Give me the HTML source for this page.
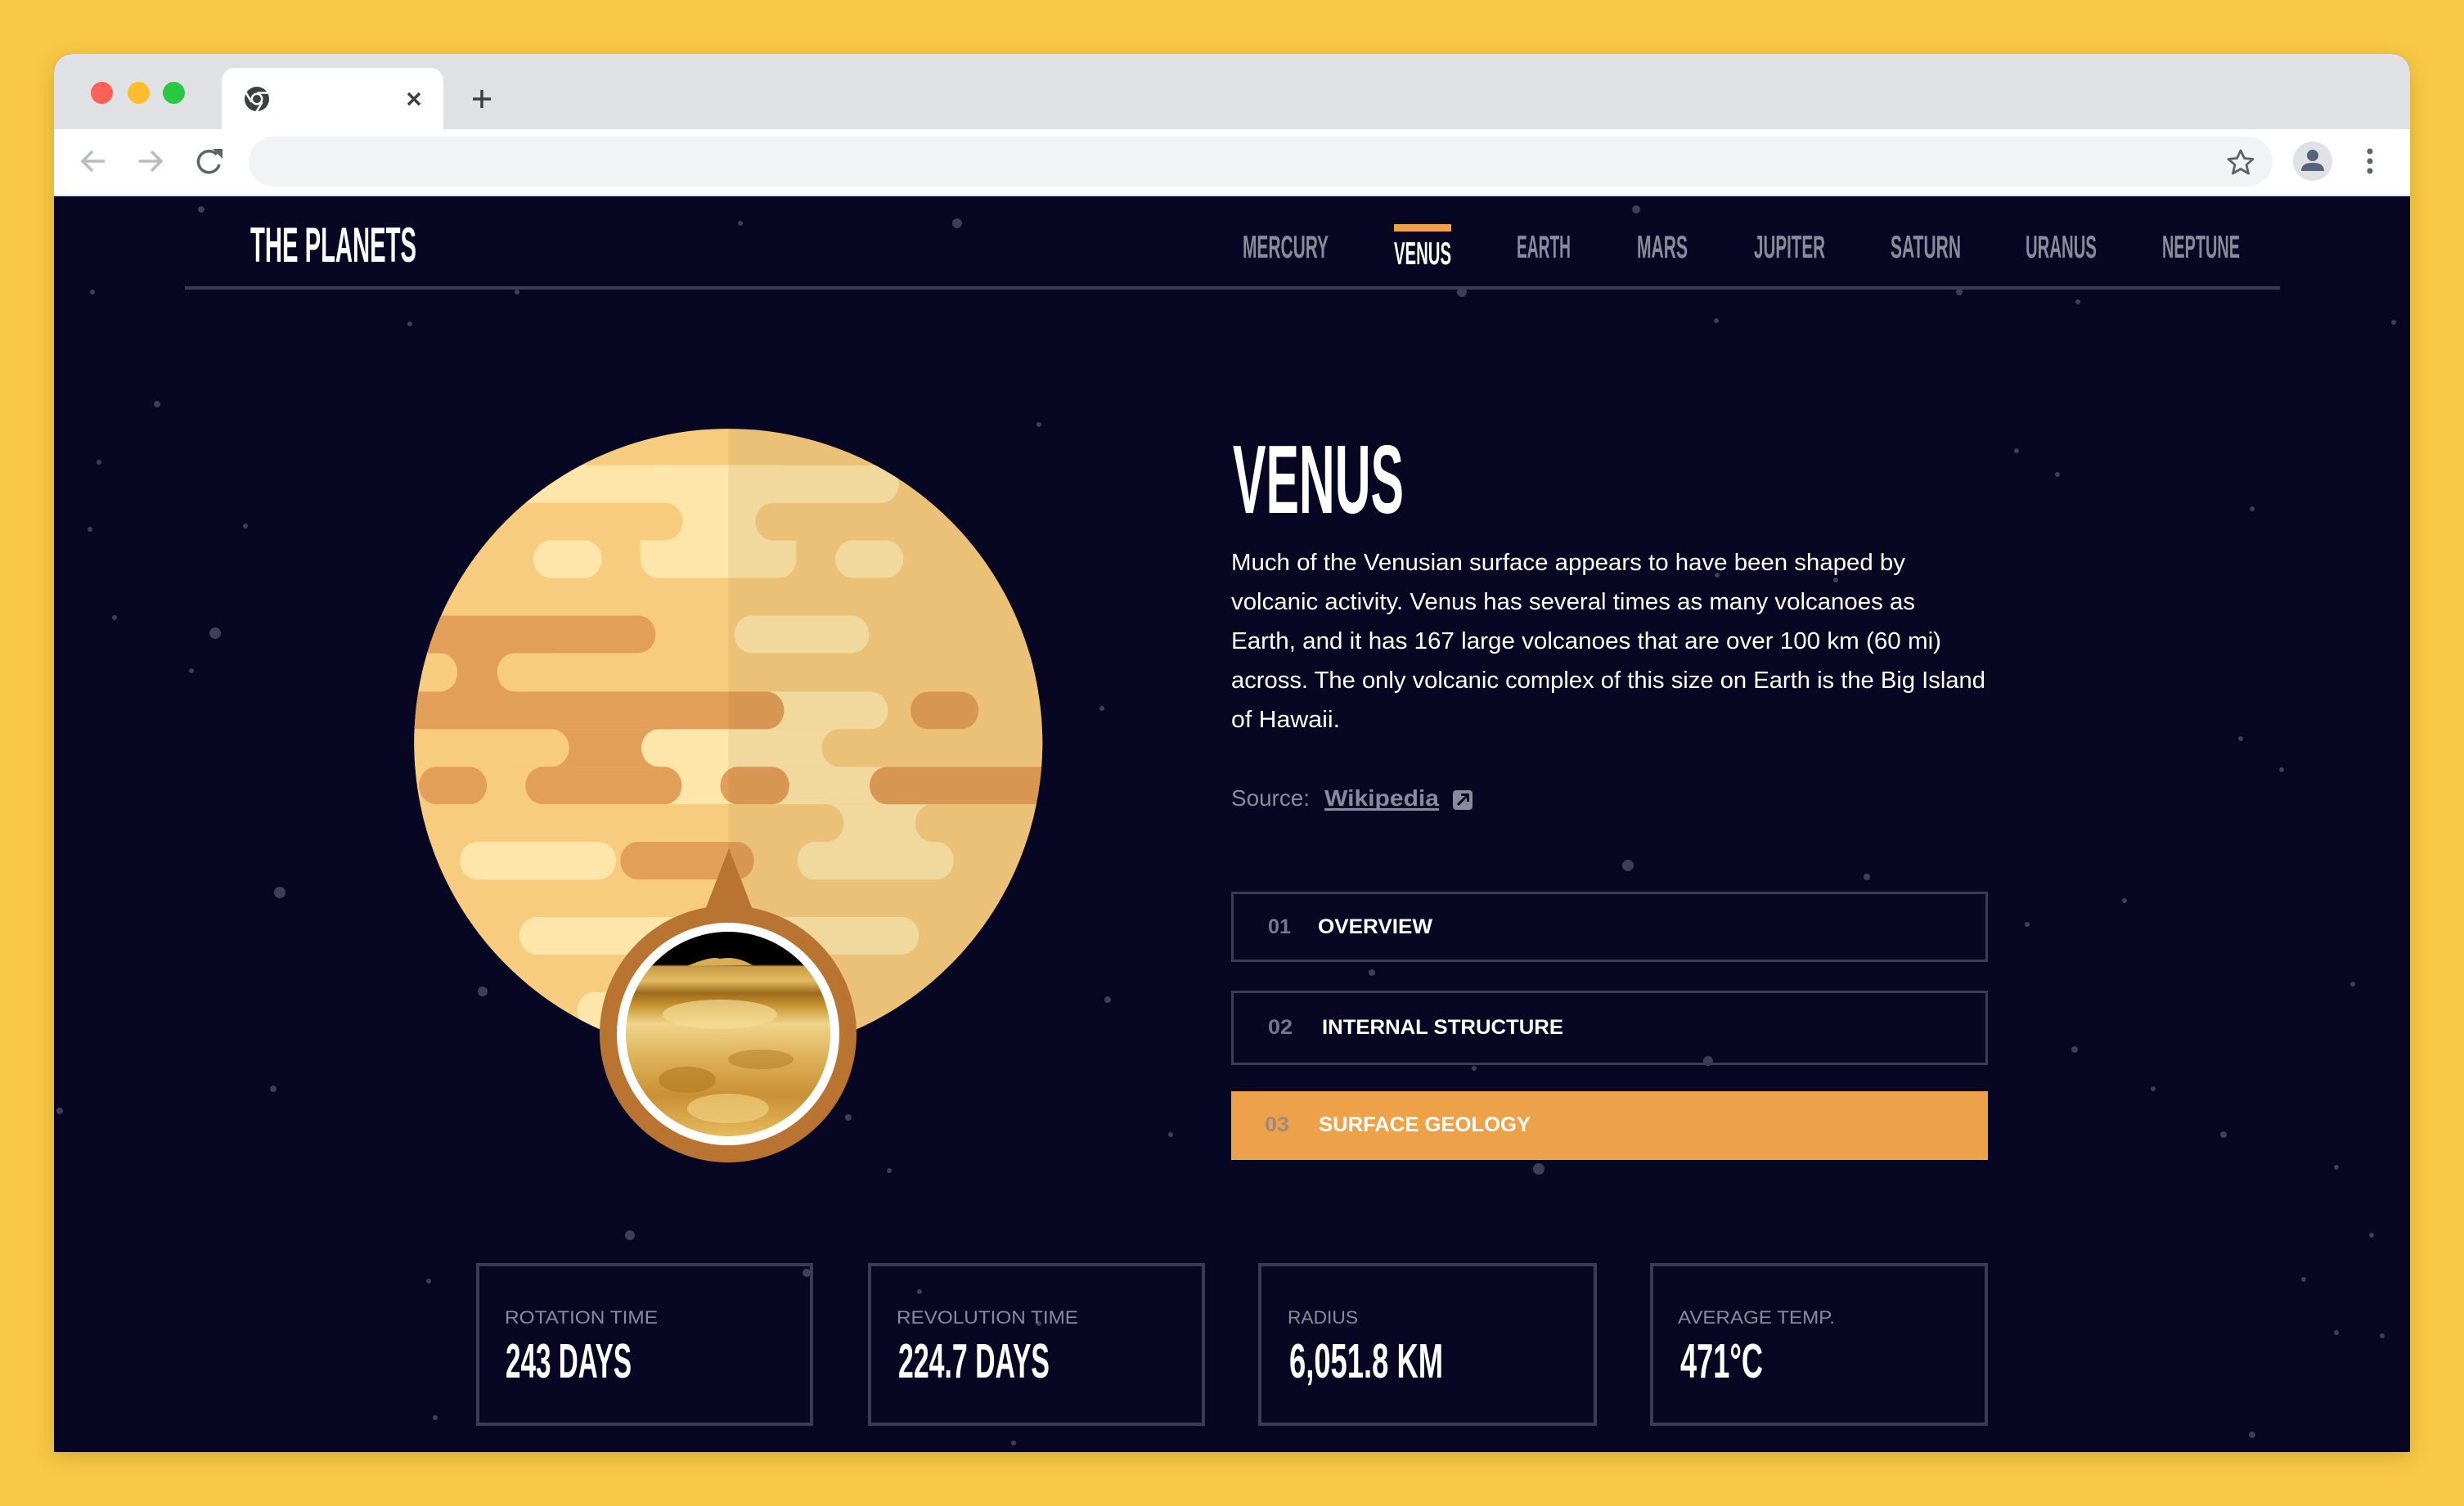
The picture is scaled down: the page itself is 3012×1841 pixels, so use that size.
<!DOCTYPE html>
<html><head><meta charset="utf-8">
<style>
html,body{margin:0;padding:0;background:#F7C944;}
body{width:3012px;height:1841px;position:relative;overflow:hidden;font-family:"Liberation Sans",sans-serif;}
.win{position:absolute;left:66px;top:66px;width:2880px;height:1709px;border-radius:22px 22px 0 0;overflow:hidden;background:#070724;box-shadow:0 6px 24px rgba(120,80,0,0.25);}
.tabbar{position:absolute;left:0;top:0;width:2880px;height:92px;background:#DFE1E5;}
.toolbar{position:absolute;left:0;top:92px;width:2880px;height:82px;background:#fff;border-bottom:2px solid #e4e5e8;box-sizing:border-box;}
.tab{position:absolute;left:205px;top:17px;width:271px;height:80px;background:#fff;border-radius:16px 16px 0 0;}
.addr{position:absolute;left:238px;top:9px;width:2474px;height:61px;border-radius:31px;background:#F1F3F4;}
.dot{position:absolute;width:27px;height:27px;border-radius:50%;top:34px;}
</style></head><body>
<div class="win">
  <div class="tabbar">
    <div class="dot" style="left:45px;background:#FE5F57"></div>
    <div class="dot" style="left:90px;background:#FEBC2E"></div>
    <div class="dot" style="left:133px;background:#28C840"></div>
    <div class="tab"></div>
    <svg style="position:absolute;left:0;top:0" width="700" height="92">
      <circle cx="248" cy="55" r="15" fill="#3c4043"/>
      <circle cx="248" cy="55" r="7.5" fill="#fff"/>
      <circle cx="248" cy="55" r="5" fill="#3c4043"/>
      <path d="M248 47.5 L262 47.5 M241.5 59 L234.5 47 M254.5 59 L247.5 70.5" stroke="#fff" stroke-width="2.5"/>
      <path d="M433 48 L447 62 M447 48 L433 62" stroke="#3c4043" stroke-width="3.5"/>
      <path d="M523 44 V66 M512 55 H534" stroke="#3c4043" stroke-width="3.5"/>
    </svg>
  </div>
  <div class="toolbar">
    <div class="addr"></div>
    <svg style="position:absolute;left:0;top:0" width="2880" height="82">
      <path d="M62 39 H36 M47 27 L35 39 L47 51" stroke="#b8bcc1" stroke-width="3.5" fill="none"/>
      <path d="M104 39 H130 M119 27 L131 39 L119 51" stroke="#b8bcc1" stroke-width="3.5" fill="none"/>
      <path d="M199 31 A13 13 0 1 0 202 43" stroke="#5f6368" stroke-width="3.5" fill="none"/>
      <path d="M194 24 L206 24 L206 36 Z" fill="#5f6368"/>
      <path d="M2673 26 L2677.5 35.5 L2688 36.5 L2680 43.5 L2682.5 54 L2673 48.5 L2663.5 54 L2666 43.5 L2658 36.5 L2668.5 35.5 Z" stroke="#5f6368" stroke-width="2.8" fill="none" stroke-linejoin="round"/>
      <circle cx="2761" cy="39" r="24" fill="#DFE1E5"/>
      <circle cx="2761" cy="32" r="7" fill="#56627a"/>
      <path d="M2747 51 Q2747 41 2761 41 Q2775 41 2775 51 Z" fill="#56627a"/>
      <circle cx="2831" cy="27" r="3.5" fill="#5f6368"/><circle cx="2831" cy="39" r="3.5" fill="#5f6368"/><circle cx="2831" cy="51" r="3.5" fill="#5f6368"/>
    </svg>
  </div>
</div>

<svg style="position:absolute;left:0;top:0" width="3012" height="1841" viewBox="0 0 3012 1841">
  <g fill="#3d3e58">
    <circle cx="246" cy="256" r="4"/><circle cx="1170" cy="273" r="6"/><circle cx="2000" cy="256" r="5"/><circle cx="905" cy="273" r="3"/>
    <circle cx="113" cy="357" r="3"/><circle cx="501" cy="396" r="3"/><circle cx="632" cy="357" r="3"/><circle cx="1787" cy="357" r="6"/>
    <circle cx="2395" cy="357" r="4"/><circle cx="2098" cy="392" r="3"/><circle cx="2540" cy="369" r="3"/><circle cx="2926" cy="394" r="3"/>
    <circle cx="192" cy="494" r="4"/><circle cx="1270" cy="519" r="3"/><circle cx="121" cy="565" r="3"/><circle cx="2465" cy="551" r="3"/>
    <circle cx="2515" cy="580" r="3"/><circle cx="2753" cy="622" r="3"/><circle cx="110" cy="647" r="3"/><circle cx="300" cy="643" r="3"/>
    <circle cx="263" cy="774" r="7"/><circle cx="234" cy="820" r="3"/><circle cx="140" cy="755" r="3"/><circle cx="1347" cy="866" r="3"/>
    <circle cx="1990" cy="1058" r="7"/><circle cx="2282" cy="1072" r="4"/><circle cx="2478" cy="1130" r="3"/><circle cx="2597" cy="1101" r="3"/>
    <circle cx="2739" cy="903" r="3"/><circle cx="2789" cy="941" r="3"/><circle cx="342" cy="1091" r="7"/><circle cx="590" cy="1212" r="6"/>
    <circle cx="1354" cy="1222" r="4"/><circle cx="1677" cy="1189" r="4"/><circle cx="2536" cy="1283" r="4"/><circle cx="2088" cy="1297" r="6"/>
    <circle cx="1802" cy="1306" r="3"/><circle cx="2632" cy="1331" r="3"/><circle cx="2876" cy="1203" r="3"/><circle cx="334" cy="1331" r="4"/>
    <circle cx="73" cy="1358" r="4"/><circle cx="1037" cy="1366" r="4"/><circle cx="1431" cy="1387" r="3"/><circle cx="1087" cy="1431" r="3"/>
    <circle cx="1881" cy="1429" r="7"/><circle cx="2718" cy="1387" r="4"/><circle cx="2856" cy="1427" r="3"/><circle cx="770" cy="1510" r="6"/>
    <circle cx="2899" cy="1510" r="3"/><circle cx="2816" cy="1564" r="3"/><circle cx="2912" cy="1633" r="3"/><circle cx="2856" cy="1629" r="3"/>
    <circle cx="524" cy="1566" r="3"/><circle cx="532" cy="1733" r="3"/><circle cx="986" cy="1556" r="5"/><circle cx="1124" cy="1579" r="3"/>
    <circle cx="1239" cy="1764" r="3"/><circle cx="2753" cy="1754" r="4"/><circle cx="1270" cy="1618" r="3"/><circle cx="2099" cy="703" r="3"/><circle cx="2244" cy="709" r="3"/>
  </g>

  <text x="306" y="320" font-family="Liberation Sans" font-weight="bold" font-size="60" fill="#fff" textLength="203" lengthAdjust="spacingAndGlyphs">THE PLANETS</text>
  <g font-family="Liberation Sans" font-weight="bold" font-size="39" fill="#8a8a9e">
    <text x="1519" y="315" textLength="105" lengthAdjust="spacingAndGlyphs">MERCURY</text>
    <text x="1704" y="323" fill="#fff" textLength="70" lengthAdjust="spacingAndGlyphs">VENUS</text>
    <text x="1854" y="315" textLength="66" lengthAdjust="spacingAndGlyphs">EARTH</text>
    <text x="2001" y="315" textLength="62" lengthAdjust="spacingAndGlyphs">MARS</text>
    <text x="2144" y="315" textLength="87" lengthAdjust="spacingAndGlyphs">JUPITER</text>
    <text x="2311" y="315" textLength="86" lengthAdjust="spacingAndGlyphs">SATURN</text>
    <text x="2476" y="315" textLength="87" lengthAdjust="spacingAndGlyphs">URANUS</text>
    <text x="2643" y="315" textLength="95" lengthAdjust="spacingAndGlyphs">NEPTUNE</text>
  </g>
  <rect x="1704" y="274" width="70" height="9" fill="#EDA249"/>
  <rect x="226" y="350" width="2561" height="4" fill="#3a3b54"/>

  <text x="1507" y="627" font-family="Liberation Sans" font-weight="bold" font-size="119" fill="#fff" textLength="209" lengthAdjust="spacingAndGlyphs">VENUS</text>
  <g font-family="Liberation Sans" font-size="29" fill="#fff">
    <text x="1505" y="697" textLength="824" lengthAdjust="spacingAndGlyphs">Much of the Venusian surface appears to have been shaped by</text>
    <text x="1505" y="745" textLength="836" lengthAdjust="spacingAndGlyphs">volcanic activity. Venus has several times as many volcanoes as</text>
    <text x="1505" y="793" textLength="868" lengthAdjust="spacingAndGlyphs">Earth, and it has 167 large volcanoes that are over 100 km (60 mi)</text>
    <text x="1505" y="841" textLength="922" lengthAdjust="spacingAndGlyphs">across. The only volcanic complex of this size on Earth is the Big Island</text>
    <text x="1505" y="889" textLength="133" lengthAdjust="spacingAndGlyphs">of Hawaii.</text>
  </g>
  <text x="1505" y="985" font-family="Liberation Sans" font-size="28" fill="#8a8a9e" textLength="96" lengthAdjust="spacingAndGlyphs">Source:</text>
  <text x="1619" y="985" font-family="Liberation Sans" font-weight="bold" font-size="28" fill="#8a8a9e" textLength="140" lengthAdjust="spacingAndGlyphs">Wikipedia</text>
  <rect x="1619" y="988" width="140" height="3" fill="#8a8a9e"/>
  <rect x="1776" y="966" width="24" height="24" rx="4" fill="#8a8a9e"/>
  <path d="M1782 984 L1794 972 M1786 971.5 H1794.5 V980" stroke="#070724" stroke-width="3" fill="none"/>

  <rect x="1506.5" y="1091.5" width="922" height="83" fill="none" stroke="#3a3b54" stroke-width="3"/>
  <rect x="1506.5" y="1212.5" width="922" height="88" fill="none" stroke="#3a3b54" stroke-width="3"/>
  <rect x="1505" y="1334" width="925" height="84" fill="#EDA249"/>
  <g font-family="Liberation Sans" font-weight="bold" font-size="25">
    <text x="1550" y="1141" fill="#767690" textLength="28" lengthAdjust="spacingAndGlyphs">01</text>
    <text x="1611" y="1141" fill="#fff" textLength="140" lengthAdjust="spacingAndGlyphs">OVERVIEW</text>
    <text x="1550" y="1264" fill="#767690" textLength="30" lengthAdjust="spacingAndGlyphs">02</text>
    <text x="1616" y="1264" fill="#fff" textLength="295" lengthAdjust="spacingAndGlyphs">INTERNAL STRUCTURE</text>
    <text x="1546" y="1383" fill="#9c8a80" textLength="30" lengthAdjust="spacingAndGlyphs">03</text>
    <text x="1612" y="1383" fill="#fff" textLength="259" lengthAdjust="spacingAndGlyphs">SURFACE GEOLOGY</text>
  </g>

  <g fill="none" stroke="#3a3b54" stroke-width="4">
    <rect x="584" y="1546" width="408" height="195"/>
    <rect x="1063" y="1546" width="408" height="195"/>
    <rect x="1540" y="1546" width="410" height="195"/>
    <rect x="2019" y="1546" width="409" height="195"/>
  </g>
  <g font-family="Liberation Sans" font-size="22" fill="#8a8a9e">
    <text x="617" y="1618" textLength="187" lengthAdjust="spacingAndGlyphs">ROTATION TIME</text>
    <text x="1096" y="1618" textLength="222" lengthAdjust="spacingAndGlyphs">REVOLUTION TIME</text>
    <text x="1574" y="1618" textLength="86" lengthAdjust="spacingAndGlyphs">RADIUS</text>
    <text x="2051" y="1618" textLength="192" lengthAdjust="spacingAndGlyphs">AVERAGE TEMP.</text>
  </g>
  <g font-family="Liberation Sans" font-weight="bold" font-size="59" fill="#fff">
    <text x="618" y="1684" textLength="154" lengthAdjust="spacingAndGlyphs">243 DAYS</text>
    <text x="1098" y="1684" textLength="185" lengthAdjust="spacingAndGlyphs">224.7 DAYS</text>
    <text x="1576" y="1684" textLength="188" lengthAdjust="spacingAndGlyphs">6,051.8 KM</text>
    <text x="2054" y="1684" textLength="101" lengthAdjust="spacingAndGlyphs">471°C</text>
  </g>
</svg>

<svg style="position:absolute;left:450px;top:480px" width="900" height="960" viewBox="0 0 1568 1568" preserveAspectRatio="none">
  <defs>
    <clipPath id="pc"><ellipse cx="767" cy="699" rx="669" ry="627"/></clipPath>
  </defs>
  <g clip-path="url(#pc)">
    <rect x="0" y="0" width="1568" height="1568" fill="#F7CC7F"/>
    <g fill="#FEE6AA">
      <rect x="-200" y="145" width="1330" height="75" rx="37.5"/>
      <rect x="580" y="145" width="332" height="225" rx="37.5"/>
    </g>
    <g fill="#F7CC7F">
      <rect x="-200" y="220" width="870" height="75" rx="37.5"/>
      <rect x="825" y="220" width="900" height="75" rx="37.5"/>
    </g>
    <rect x="300" y="672" width="350" height="75" fill="#E29F5A"/>
    <g fill="#FEE6AA">
      <rect x="352" y="295" width="146" height="75" rx="37.5"/>
      <rect x="995" y="295" width="145" height="75" rx="37.5"/>
      <rect x="780" y="445" width="287" height="75" rx="37.5"/>
      <rect x="700" y="597" width="407" height="75" rx="37.5"/>
      <rect x="582" y="672" width="500" height="75" rx="37.5"/>
      <rect x="620" y="747" width="500" height="75"/>
      <rect x="950" y="822" width="300" height="75"/>
    </g>
    <g fill="#E29F5A">
      <rect x="-200" y="445" width="812" height="75" rx="37.5"/>
      <rect x="-200" y="480" width="600" height="150"/>
    </g>
    <g fill="#F7CC7F">
      <rect x="-200" y="520" width="390" height="77" rx="37.5"/>
      <rect x="275" y="520" width="1500" height="77" rx="37.5"/>
    </g>
    <g fill="#E29F5A">
      <rect x="-200" y="597" width="1086" height="75" rx="37.5"/>
      <rect x="1155" y="597" width="145" height="75" rx="37.5"/>
    </g>
    <g fill="#F7CC7F">
      <rect x="-200" y="672" width="628" height="75" rx="37.5"/>
      <rect x="966" y="672" width="800" height="75" rx="37.5"/>
    </g>
    <g fill="#E29F5A">
      <rect x="108" y="747" width="145" height="75" rx="37.5"/>
      <rect x="335" y="747" width="333" height="75" rx="37.5"/>
      <rect x="750" y="747" width="147" height="75" rx="37.5"/>
      <rect x="1068" y="747" width="800" height="75" rx="37.5"/>
    </g>
    <g fill="#F7CC7F">
      <rect x="-200" y="822" width="1213" height="75" rx="37.5"/>
      <rect x="1165" y="822" width="800" height="75" rx="37.5"/>
    </g>
    <g fill="#FEE6AA">
      <rect x="195" y="897" width="333" height="75" rx="37.5"/>
      <rect x="914" y="897" width="333" height="75" rx="37.5"/>
      <rect x="322" y="1047" width="851" height="75" rx="37.5"/>
      <rect x="445" y="1197" width="400" height="75" rx="37.5"/>
    </g>
    <rect x="537" y="897" width="285" height="75" rx="37.5" fill="#E29F5A"/>
    <rect x="767" y="0" width="800" height="1568" fill="#5a3a10" opacity="0.08"/>
  </g>
</svg>

<svg style="position:absolute;left:0;top:0" width="3012" height="1841">
  <defs>
    <clipPath id="ic"><circle cx="890" cy="1264" r="125"/></clipPath>
    <linearGradient id="sky" x1="0" y1="0" x2="0" y2="1">
      <stop offset="0" stop-color="#000"/><stop offset="0.16" stop-color="#000"/>
      <stop offset="0.17" stop-color="#c89a45"/><stop offset="0.24" stop-color="#e2bb62"/>
      <stop offset="0.3" stop-color="#9c6a1c"/><stop offset="0.36" stop-color="#c7942f"/>
      <stop offset="0.45" stop-color="#f0d48a"/><stop offset="0.62" stop-color="#ddb058"/>
      <stop offset="0.8" stop-color="#c99034"/><stop offset="1" stop-color="#e5bb5c"/>
    </linearGradient>
  </defs>
  <path d="M891 1037 L862 1112 L920 1112 Z" fill="#B87430"/>
  <circle cx="890" cy="1264" r="157" fill="#B87430"/>
  <circle cx="890" cy="1264" r="136" fill="#fff"/>
  <g clip-path="url(#ic)">
    <rect x="765" y="1139" width="250" height="250" fill="url(#sky)"/>
    <path d="M840 1181 Q870 1168 880 1172 Q900 1168 920 1180 Z" fill="#d9ad55"/>
    <ellipse cx="880" cy="1240" rx="70" ry="18" fill="#f3da96" opacity="0.7"/>
    <ellipse cx="840" cy="1320" rx="35" ry="16" fill="#b07a22" opacity="0.6"/>
    <ellipse cx="930" cy="1295" rx="40" ry="12" fill="#b07a22" opacity="0.5"/>
    <ellipse cx="890" cy="1355" rx="50" ry="18" fill="#f0cf7f" opacity="0.7"/>
  </g>
</svg>
</body></html>
